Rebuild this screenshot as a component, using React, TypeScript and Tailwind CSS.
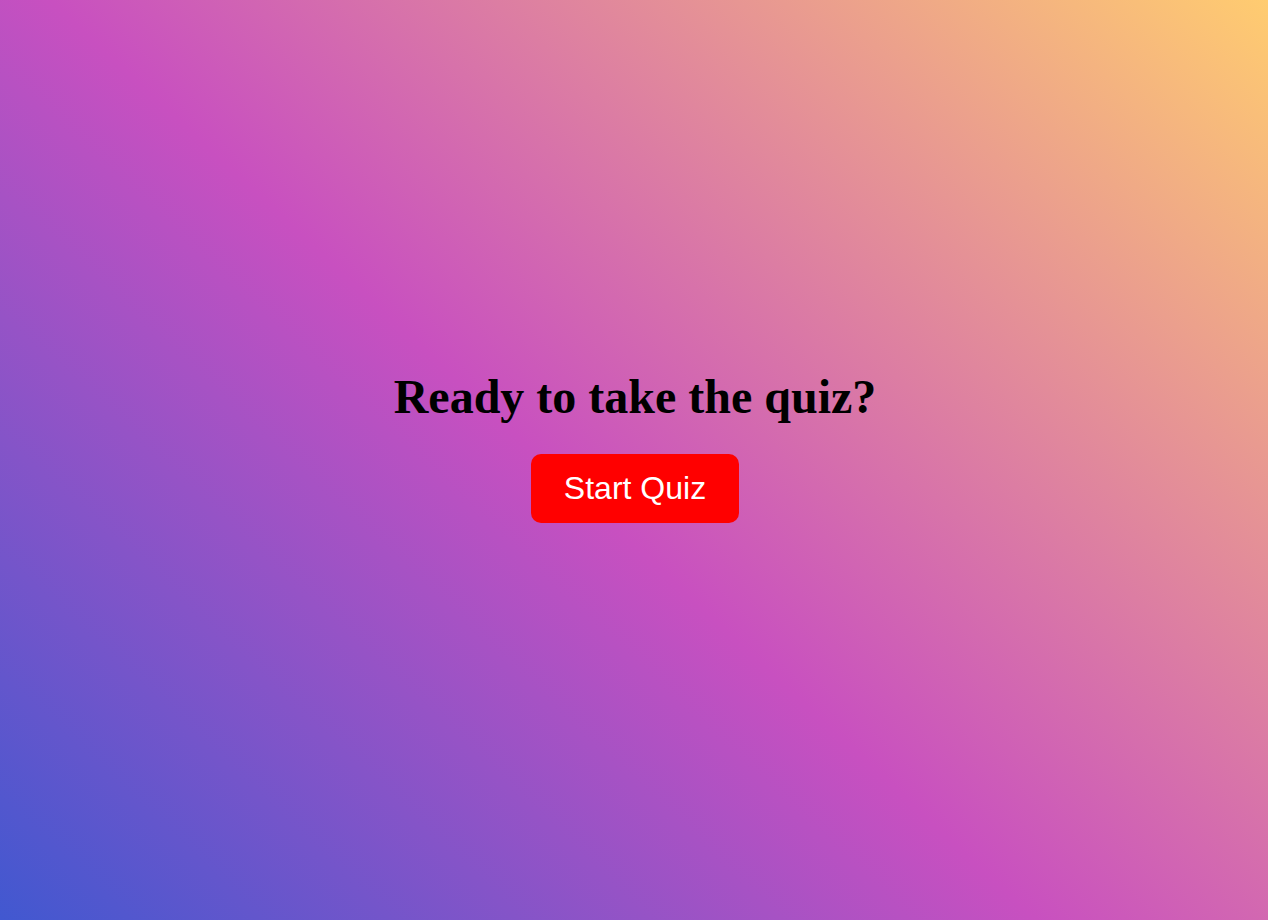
import React from "react";

export default function App() {
  return (
    <div className="h-[920px] w-full bg-[linear-gradient(43deg,#4158D0_0%,#C850C0_46%,#FFCC70_100%)] flex flex-col items-center justify-center pb-[28px] pl-[2px]">
      <h1 className="text-[48px] leading-[55px] font-bold text-black font-['Liberation_Serif','Times_New_Roman',serif]">
        Ready to take the quiz?
      </h1>
      <button className="mt-[30px] bg-[#ff0000] text-white rounded-[10px] px-[32.5px] py-[16px] text-[32px] leading-[37px] font-['Liberation_Sans',Arial,sans-serif]">
        Start Quiz
      </button>
    </div>
  );
}
